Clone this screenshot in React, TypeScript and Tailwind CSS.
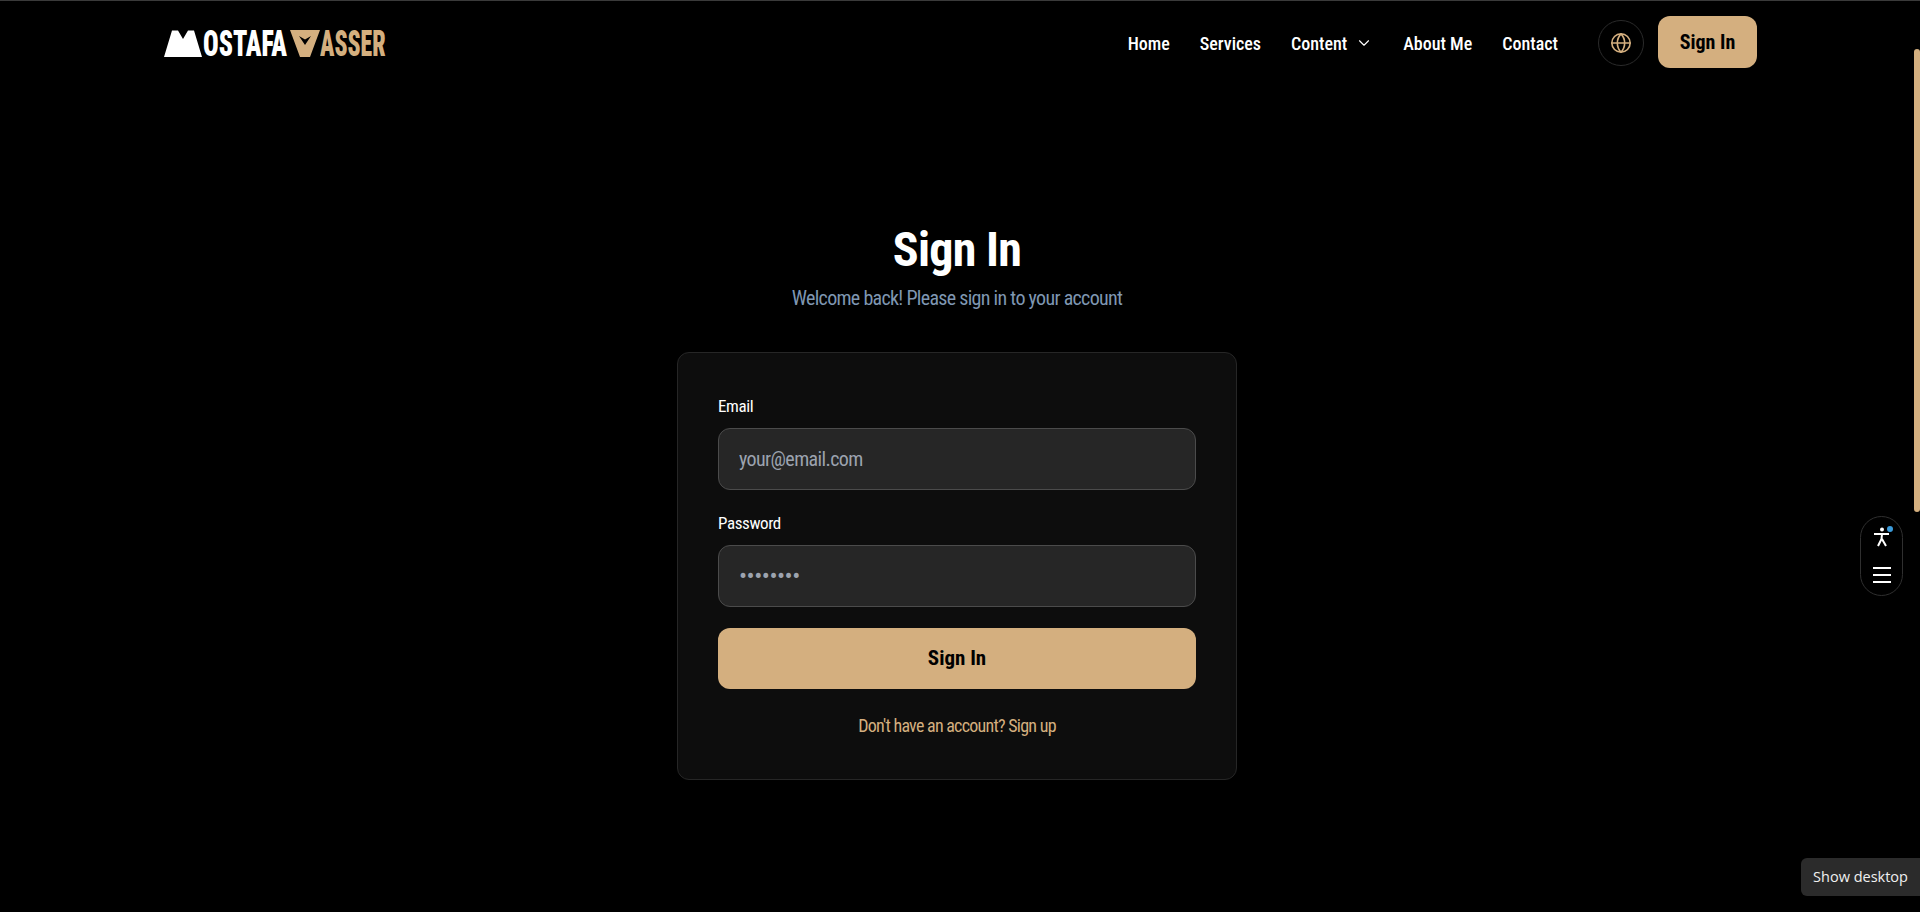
import { ChevronDown, Globe } from 'lucide-react';

function Logo() {
  return (
    <div className="mt-[3px] flex items-center h-[27px] font-black text-[36px] leading-none">
      <svg viewBox="0 0 38 27" className="w-[38px] h-[27px] shrink-0" fill="#fff">
        <path d="M0 27 L8 0.5 H14 L19 9 L24 0.5 H30 L38 27 Z" />
      </svg>
      <span className="block w-[85px] ml-[1px] text-white origin-left scale-x-[0.72]">OSTAFA</span>
      <svg viewBox="0 0 30 27" className="w-[30px] h-[27px] ml-[2px] shrink-0" fill="#d4af7f">
        <path d="M0 0 H30 L20 27 H10 Z M9 6 L15 15 L21 6 L15 9.5 Z" fillRule="evenodd" />
      </svg>
      <span className="block w-[63px] text-[#d4af7f] origin-left scale-x-[0.66]">ASSER</span>
    </div>
  );
}

function Field({ label, placeholder, type }: { label: string; placeholder: string; type: string }) {
  return (
    <div>
      <label className="block text-white text-[17px] leading-[26px] mb-[9px] tracking-[-0.4px]">{label}</label>
      <input
        type={type}
        placeholder={placeholder}
        className={
          type === 'password'
            ? 'block w-full h-[62px] px-[20px] rounded-[12px] bg-[#262626] border border-[#4b4b4b] text-[24px] tracking-[-0.5px] text-white placeholder:text-[#9ca3af] outline-none'
            : 'block w-full h-[62px] px-[20px] rounded-[12px] bg-[#262626] border border-[#4b4b4b] text-[20px] tracking-[-0.6px] text-white placeholder:text-[#9ca3af] outline-none'
        }
      />
    </div>
  );
}

export default function App() {
  return (
    <div className="relative h-[912px] overflow-hidden bg-black font-['Roboto_Condensed','Liberation_Sans',sans-serif]">
      {/* top edge */}
      <div className="h-px bg-[#3a3a3a]" />

      <header className="flex items-center justify-between h-[82px] pl-[164px] pr-[163px]">
        <Logo />
        <div className="flex items-center">
          <nav className="mt-[2px] flex items-center gap-[30px] text-white text-[18px] font-medium">
            <a>Home</a>
            <a>Services</a>
            <a className="flex items-center gap-[8px]">
              Content <ChevronDown className="w-[18px] h-[18px]" strokeWidth={1.5} />
            </a>
            <a>About Me</a>
            <a>Contact</a>
          </nav>
          <button className="mt-[2px] ml-[40px] w-[46px] h-[46px] rounded-full border border-[#2a2a2a] flex items-center justify-center text-[#d4af7f]">
            <Globe className="w-[22px] h-[22px]" strokeWidth={1.75} />
          </button>
          <button className="ml-[14px] w-[99px] h-[52px] rounded-[12px] bg-[#d4af7f] text-black text-[20px] font-bold">
            Sign In
          </button>
        </div>
      </header>

      <main className="w-[1914px] flex flex-col items-center pt-[137px]">
        <h1 className="text-white text-[48px] leading-[60px] font-bold tracking-[-0.7px]">Sign In</h1>
        <p className="mt-[4px] text-[#7f97b2] text-[20px] leading-[28px] tracking-[-0.7px]">Welcome back! Please sign in to your account</p>

        <div className="mt-[40px] w-[560px] h-[428px] p-[40px] rounded-[12px] bg-[#0d0d0d] border border-[#262626]">
          <div className="flex flex-col gap-[20px]">
            <Field label="Email" placeholder="your@email.com" type="email" />
            <Field label="Password" placeholder="••••••••" type="password" />
          </div>
          <button className="mt-[21px] w-full h-[61px] rounded-[12px] bg-[#d4af7f] text-black text-[21px] font-bold">
            Sign In
          </button>
          <p className="mt-[23px] text-center text-[#d4af7f] text-[18px] leading-[28px] tracking-[-0.75px]">Don't have an account? Sign up</p>
        </div>
      </main>

      {/* scrollbar thumb */}
      <div className="absolute right-0 top-[49px] w-[6px] h-[463px] rounded-full bg-[#d4af7f]" />

      {/* accessibility widget */}
      <div className="absolute left-[1860px] top-[516px] w-[43px] h-[80px] rounded-full border border-[#2f2f2f] flex flex-col items-center">
        <div className="relative mt-[8px]">
          <svg viewBox="0 0 24 24" className="w-[24px] h-[24px]" fill="none" stroke="#fff" strokeWidth="2">
            <circle cx="12" cy="4.5" r="2" fill="#fff" stroke="none" />
            <path d="M4 9 H19 M12 9 L11.5 14 M11.5 14 L8 21 M12 14 L16 21" />
          </svg>
          <span className="absolute right-[1px] top-[1px] w-[6px] h-[6px] rounded-full bg-[#3b9ad9]" />
        </div>
        <div className="mt-[18px] flex flex-col gap-[5px]">
          <span className="block w-[18px] h-[2px] bg-white" />
          <span className="block w-[18px] h-[2px] bg-white" />
          <span className="block w-[18px] h-[2px] bg-white" />
        </div>
      </div>

      {/* tooltip */}
      <div className="absolute right-0 top-[858px] w-[119px] h-[38px] rounded-l-[6px] bg-[#2b2b2b] flex items-center justify-center text-[#f0f0f0] text-[14.5px] font-['Open_Sans',sans-serif]">
        Show desktop
      </div>
    </div>
  );
}
